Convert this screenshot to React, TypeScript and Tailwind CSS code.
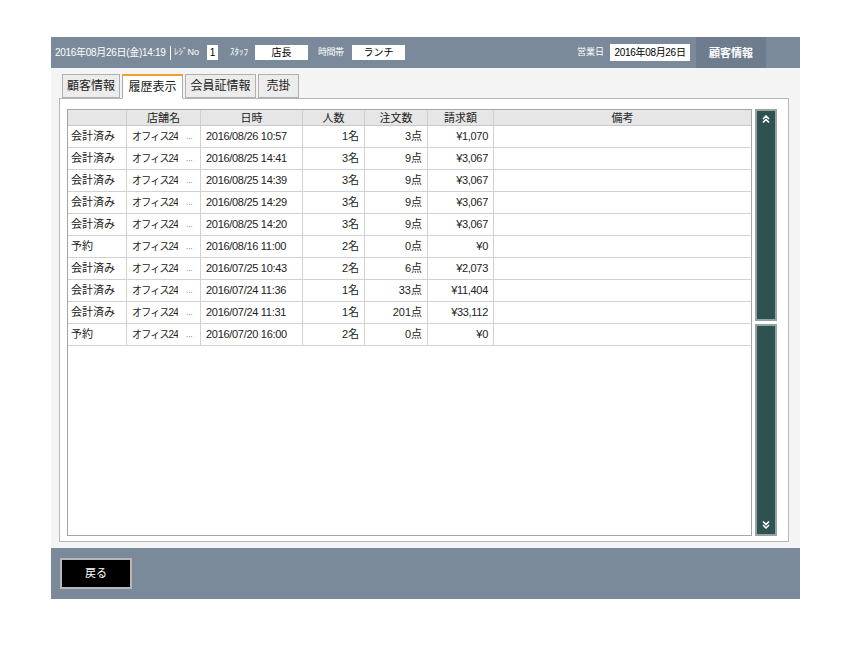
import React from 'react';
import { ChevronsUp, ChevronsDown } from 'lucide-react';

interface HistoryRow {
  status: string;
  shop: string;
  date: string;
  people: string;
  orders: string;
  amount: string;
}

const rows: HistoryRow[] = [
  { status: '会計済み', shop: 'オフィス24', date: '2016/08/26 10:57', people: '1名', orders: '3点', amount: '¥1,070' },
  { status: '会計済み', shop: 'オフィス24', date: '2016/08/25 14:41', people: '3名', orders: '9点', amount: '¥3,067' },
  { status: '会計済み', shop: 'オフィス24', date: '2016/08/25 14:39', people: '3名', orders: '9点', amount: '¥3,067' },
  { status: '会計済み', shop: 'オフィス24', date: '2016/08/25 14:29', people: '3名', orders: '9点', amount: '¥3,067' },
  { status: '会計済み', shop: 'オフィス24', date: '2016/08/25 14:20', people: '3名', orders: '9点', amount: '¥3,067' },
  { status: '予約', shop: 'オフィス24', date: '2016/08/16 11:00', people: '2名', orders: '0点', amount: '¥0' },
  { status: '会計済み', shop: 'オフィス24', date: '2016/07/25 10:43', people: '2名', orders: '6点', amount: '¥2,073' },
  { status: '会計済み', shop: 'オフィス24', date: '2016/07/24 11:36', people: '1名', orders: '33点', amount: '¥11,404' },
  { status: '会計済み', shop: 'オフィス24', date: '2016/07/24 11:31', people: '1名', orders: '201点', amount: '¥33,112' },
  { status: '予約', shop: 'オフィス24', date: '2016/07/20 16:00', people: '2名', orders: '0点', amount: '¥0' },
];

const tabs = [
  { label: '顧客情報', w: 'w-[58px]' },
  { label: '履歴表示', w: 'w-[61px]' },
  { label: '会員証情報', w: 'w-[71px]' },
  { label: '売掛', w: 'w-[41px]' },
];

const font = { fontFamily: '"Liberation Sans", "Noto Sans CJK JP", sans-serif' };

const App: React.FC = () => {
  return (
    <div className="w-[847px] h-[647px] bg-white pt-[37px] pl-[51px]" style={font}>
      <div className="w-[749px] flex flex-col">
        {/* top bar */}
        <div className="h-[31px] bg-[#7b8a9a] flex items-center text-white">
          <span className="shrink-0 ml-[4px] w-[112px] text-[10px] tracking-[-0.3px] whitespace-nowrap">2016年08月26日(金)14:19</span>
          <span className="shrink-0 ml-[3px] w-px h-[14px] bg-white" />
          <span className="shrink-0 ml-[3px] w-[33px] text-[9px] whitespace-nowrap">ﾚｼﾞNo</span>
          <span className="shrink-0 w-[11px] h-[15px] bg-white text-black text-[10px] flex items-center justify-center">1</span>
          <span className="shrink-0 ml-[12px] w-[25px] text-[9px] whitespace-nowrap">ｽﾀｯﾌ</span>
          <span className="shrink-0 w-[53px] h-[15px] bg-white text-black text-[10px] flex items-center justify-center">店長</span>
          <span className="shrink-0 ml-[10px] w-[34px] text-[9px] tracking-[-0.5px] whitespace-nowrap">時間帯</span>
          <span className="shrink-0 w-[53px] h-[15px] bg-white text-black text-[10px] flex items-center justify-center">ランチ</span>
          <span className="ml-auto text-[9px] whitespace-nowrap">営業日</span>
          <span className="shrink-0 ml-[6px] w-[80px] h-[17px] bg-white text-black text-[10px] flex items-center justify-center tracking-[-0.3px]">2016年08月26日</span>
          <span className="shrink-0 ml-[6px] w-[70px] h-full bg-[#6e7d8d] text-white text-[11px] font-bold flex items-start justify-center pt-[8px]">顧客情報</span>
          <span className="shrink-0 w-[34px]" />
        </div>

        {/* content */}
        <div className="h-[480px] bg-[#f4f4f4] pl-[8px] pr-[11px] pt-[6px]">
          <div className="flex items-end h-[24px] pl-[3px] gap-[2px]">
            {tabs.map((t, i) => (
              <div
                key={t.label}
                className={
                  i === 1
                    ? `${t.w} h-[25px] flex items-center justify-center bg-white border border-[#a8a8a8] border-b-white border-t-2 border-t-[#f0a030] text-[12px] text-[#222] -mb-px relative z-10 whitespace-nowrap`
                    : `${t.w} h-[24px] flex items-center justify-center bg-[#ececec] border border-[#b0b0b0] text-[12px] text-[#222] whitespace-nowrap`
                }
              >
                {t.label}
              </div>
            ))}
          </div>
          <div className="h-[444px] bg-white border border-[#b5b5b5] pl-[7px] pr-[11px] pt-[10px] pb-[5px] flex">
            {/* table */}
            <div className="w-[685px] h-full border border-[#a5a5a5] bg-white text-[11px] text-[#222]">
              <div className="flex h-[16px] bg-[#e6e6e6] border-b border-[#c8c8c8]">
                <div className="w-[59px] border-r border-[#d0d0d0]" />
                <div className="w-[74px] border-r border-[#d0d0d0] text-center leading-[16px]">店舗名</div>
                <div className="w-[102px] border-r border-[#d0d0d0] text-center leading-[16px]">日時</div>
                <div className="w-[62px] border-r border-[#d0d0d0] text-center leading-[16px]">人数</div>
                <div className="w-[63px] border-r border-[#d0d0d0] text-center leading-[16px]">注文数</div>
                <div className="w-[66px] border-r border-[#d0d0d0] text-center leading-[16px]">請求額</div>
                <div className="flex-1 text-center leading-[16px]">備考</div>
              </div>
              {rows.map((r, i) => (
                <div key={i} className="flex h-[22px] border-b border-[#d2d2d2] leading-[21px]">
                  <div className="w-[59px] border-r border-[#d2d2d2] pl-[3px]">{r.status}</div>
                  <div className="w-[74px] border-r border-[#d2d2d2] pl-[5px] flex">
                    <span className="w-[46px] overflow-hidden whitespace-nowrap text-[10px] tracking-[-0.8px]">{r.shop}</span>
                    <span className="ml-[8px] text-[8px] text-[#666]">...</span>
                  </div>
                  <div className="w-[102px] border-r border-[#d2d2d2] pl-[5px] tracking-[-0.3px]">{r.date}</div>
                  <div className="w-[62px] border-r border-[#d2d2d2] pr-[5px] text-right">{r.people}</div>
                  <div className="w-[63px] border-r border-[#d2d2d2] pr-[5px] text-right">{r.orders}</div>
                  <div className="w-[66px] border-r border-[#d2d2d2] pr-[5px] text-right tracking-[-0.3px]">{r.amount}</div>
                  <div className="flex-1" />
                </div>
              ))}
            </div>
            {/* scrollbar */}
            <div className="ml-[3px] w-[22px] h-full flex flex-col gap-[3px]">
              <div className="flex-1 bg-[#2d524f] border-2 border-[#9aa3a3] flex justify-center pt-[2px]">
                <ChevronsUp size={12} strokeWidth={3.5} color="#ffffff" />
              </div>
              <div className="flex-1 bg-[#2d524f] border-2 border-[#9aa3a3] flex items-end justify-center pb-[3px]">
                <ChevronsDown size={12} strokeWidth={3.5} color="#ffffff" />
              </div>
            </div>
          </div>
        </div>

        {/* bottom bar */}
        <div className="h-[51px] bg-[#7b8a9a] pl-[9px] pt-[10px]">
          <button className="w-[72px] h-[31px] bg-black border-2 border-[#b8b8b8] text-white text-[11px]">
            戻る
          </button>
        </div>
      </div>
    </div>
  );
};

export default App;
